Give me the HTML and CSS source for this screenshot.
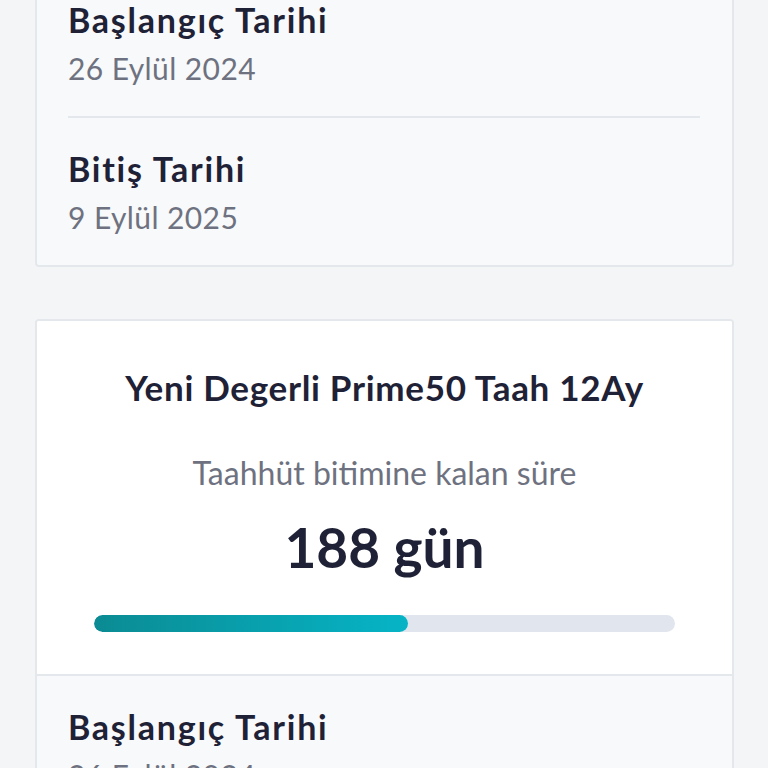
FILE: index.html
```
<!DOCTYPE html>
<html lang="tr">
<head>
<meta charset="utf-8">
<link rel="stylesheet" href="styles.css">
</head>
<body>
<div class="page">
  <section class="card card-first">
    <div class="row">
      <div class="label">Başlangıç Tarihi</div>
      <div class="value">26 Eylül 2024</div>
    </div>
    <div class="row">
      <div class="label">Bitiş Tarihi</div>
      <div class="value">9 Eylül 2025</div>
    </div>
  </section>

  <section class="card">
    <div class="summary">
      <div class="plan">Yeni Degerli Prime50 Taah 12Ay</div>
      <div class="remaining-label">Taahhüt bitimine kalan süre</div>
      <div class="remaining">188 gün</div>
      <div class="track"><div class="fill" style="width:54%"></div></div>
    </div>
    <div class="details">
      <div class="row">
        <div class="label">Başlangıç Tarihi</div>
        <div class="value">26 Eylül 2024</div>
      </div>
    </div>
  </section>
</div>
</body>
</html>
```
FILE: styles.css
```
html, body {
  margin: 0;
  padding: 0;
}
body {
  background: #f4f5f7;
  font-family: Lato, "Noto Sans", sans-serif;
  color: #1f2236;
  height: 768px;
  overflow: hidden;
}
.page {
  padding: 0 34px 0 35px;
  display: flex;
  flex-direction: column;
  gap: 52px;
}
.card {
  background: #f8f9fb;
  border: 2px solid #e4e7eb;
  border-radius: 4px;
  overflow: hidden;
}
.card-first {
  margin-top: -33px;
}
.row {
  margin: 0 32px 0 31px;
  padding: 31px 0 30px;
}
.row + .row {
  border-top: 2px solid #e4e7eb;
}
.label {
  font-size: 34px;
  line-height: 40px;
  font-weight: 700;
  letter-spacing: 1.75px;
}
.value {
  margin-top: 10px;
  font-size: 30px;
  line-height: 36px;
  color: #6e7280;
  letter-spacing: 0.4px;
}
.summary {
  background: #ffffff;
  padding: 45px 57px 42px;
  text-align: center;
  border-bottom: 2px solid #e4e7eb;
}
.plan {
  font-size: 35px;
  line-height: 42px;
  font-weight: 700;
  letter-spacing: 0.7px;
}
.remaining-label {
  margin-top: 46px;
  font-size: 32px;
  line-height: 38px;
  color: #6e7280;
}
.remaining {
  margin-top: 23px;
  font-size: 55px;
  line-height: 64px;
  font-weight: 700;
}
.track {
  margin-top: 36px;
  height: 17px;
  border-radius: 9px;
  background: #e1e6ee;
  overflow: hidden;
}
.fill {
  height: 100%;
  border-radius: 9px;
  background: linear-gradient(90deg, #0b8b93, #06b4c6);
}
```
